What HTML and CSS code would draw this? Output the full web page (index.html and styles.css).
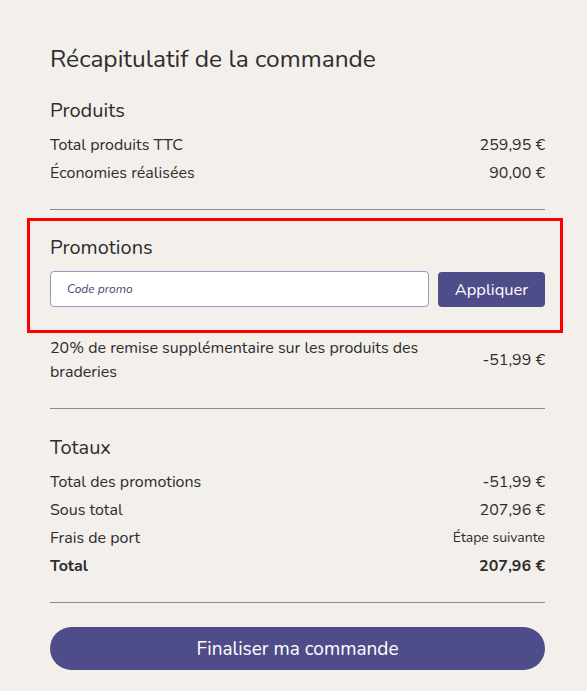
FILE: index.html
```html
<!DOCTYPE html>
<html lang="fr">
<head>
<meta charset="utf-8">
<link rel="stylesheet" href="styles.css">
</head>
<body>
<main class="summary">
  <h1 class="title">Récapitulatif de la commande</h1>

  <section class="block block-first">
    <h2 class="block-title">Produits</h2>
    <div class="row"><span>Total produits TTC</span><span>259,95 €</span></div>
    <div class="row"><span>Économies réalisées</span><span>90,00 €</span></div>
  </section>

  <hr class="divider">

  <section class="promo">
    <h2 class="block-title">Promotions</h2>
    <form class="promo-form">
      <input class="promo-input" type="text" placeholder="Code promo">
      <button class="promo-btn" type="button">Appliquer</button>
    </form>
  </section>

  <div class="row discount"><span class="discount-label">20% de remise supplémentaire sur les produits des braderies</span><span>-51,99 €</span></div>

  <hr class="divider">

  <section class="block block-totals">
    <h2 class="block-title">Totaux</h2>
    <div class="row"><span>Total des promotions</span><span>-51,99 €</span></div>
    <div class="row"><span>Sous total</span><span>207,96 €</span></div>
    <div class="row"><span>Frais de port</span><span class="small">Étape suivante</span></div>
    <div class="row total"><span>Total</span><span>207,96 €</span></div>
  </section>

  <hr class="divider">

  <button class="checkout" type="button">Finaliser ma commande</button>
</main>
</body>
</html>
```

FILE: styles.css
```css
* { box-sizing: border-box; }
html, body { margin: 0; padding: 0; }
body {
  background: #f3efeb;
  color: #2e2d2c;
  font-family: "Nunito", "Lato", "Noto Sans", sans-serif;
}
.summary {
  width: 495px;
  margin-left: 50px;
  padding-top: 43px;
}
.title {
  margin: 0;
  font-size: 24.5px;
  font-weight: 400;
  line-height: 32px;
}
.block-title {
  margin: 0 0 6px;
  font-size: 20px;
  font-weight: 400;
  line-height: 28px;
}
.block-first { margin-top: 22px; }
.block-totals { margin-top: 25px; }
.row {
  display: flex;
  justify-content: space-between;
  align-items: center;
  font-size: 16px;
  line-height: 28px;
}
.small { font-size: 14px; }
.total { font-weight: 700; }
.divider {
  border: 0;
  border-top: 1px solid #8f8b88;
  margin: 22px 0 0;
}
.promo {
  margin: 8px -18px 0 -23px;
  border: 3px solid #ff0000;
  padding: 13px 15px 23px 20px;
}
.promo .block-title { margin-bottom: 9px; }
.promo-form {
  display: flex;
  gap: 9px;
}
.promo-input {
  flex: 1;
  height: 36px;
  border: 1px solid #9b98c4;
  border-radius: 4px;
  background: #fff;
  padding: 0 16px;
  font-family: inherit;
  font-size: 12px;
  font-style: italic;
}
.promo-input::placeholder { color: #4a4878; }
.promo-btn {
  width: 107px;
  height: 35px;
  margin-top: 1px;
  border: 0;
  border-radius: 4px;
  background: #4f4d89;
  color: #fff;
  font-family: inherit;
  font-size: 16.5px;
}
.discount {
  margin-top: 3px;
  line-height: 24px;
}
.discount-label { max-width: 380px; }
.discount + .divider { margin-top: 24px; }
.checkout {
  display: block;
  width: 100%;
  height: 43px;
  margin-top: 24px;
  border: 0;
  border-radius: 22px;
  background: #4f4d89;
  color: #fff;
  font-family: inherit;
  font-size: 19px;
}
```
